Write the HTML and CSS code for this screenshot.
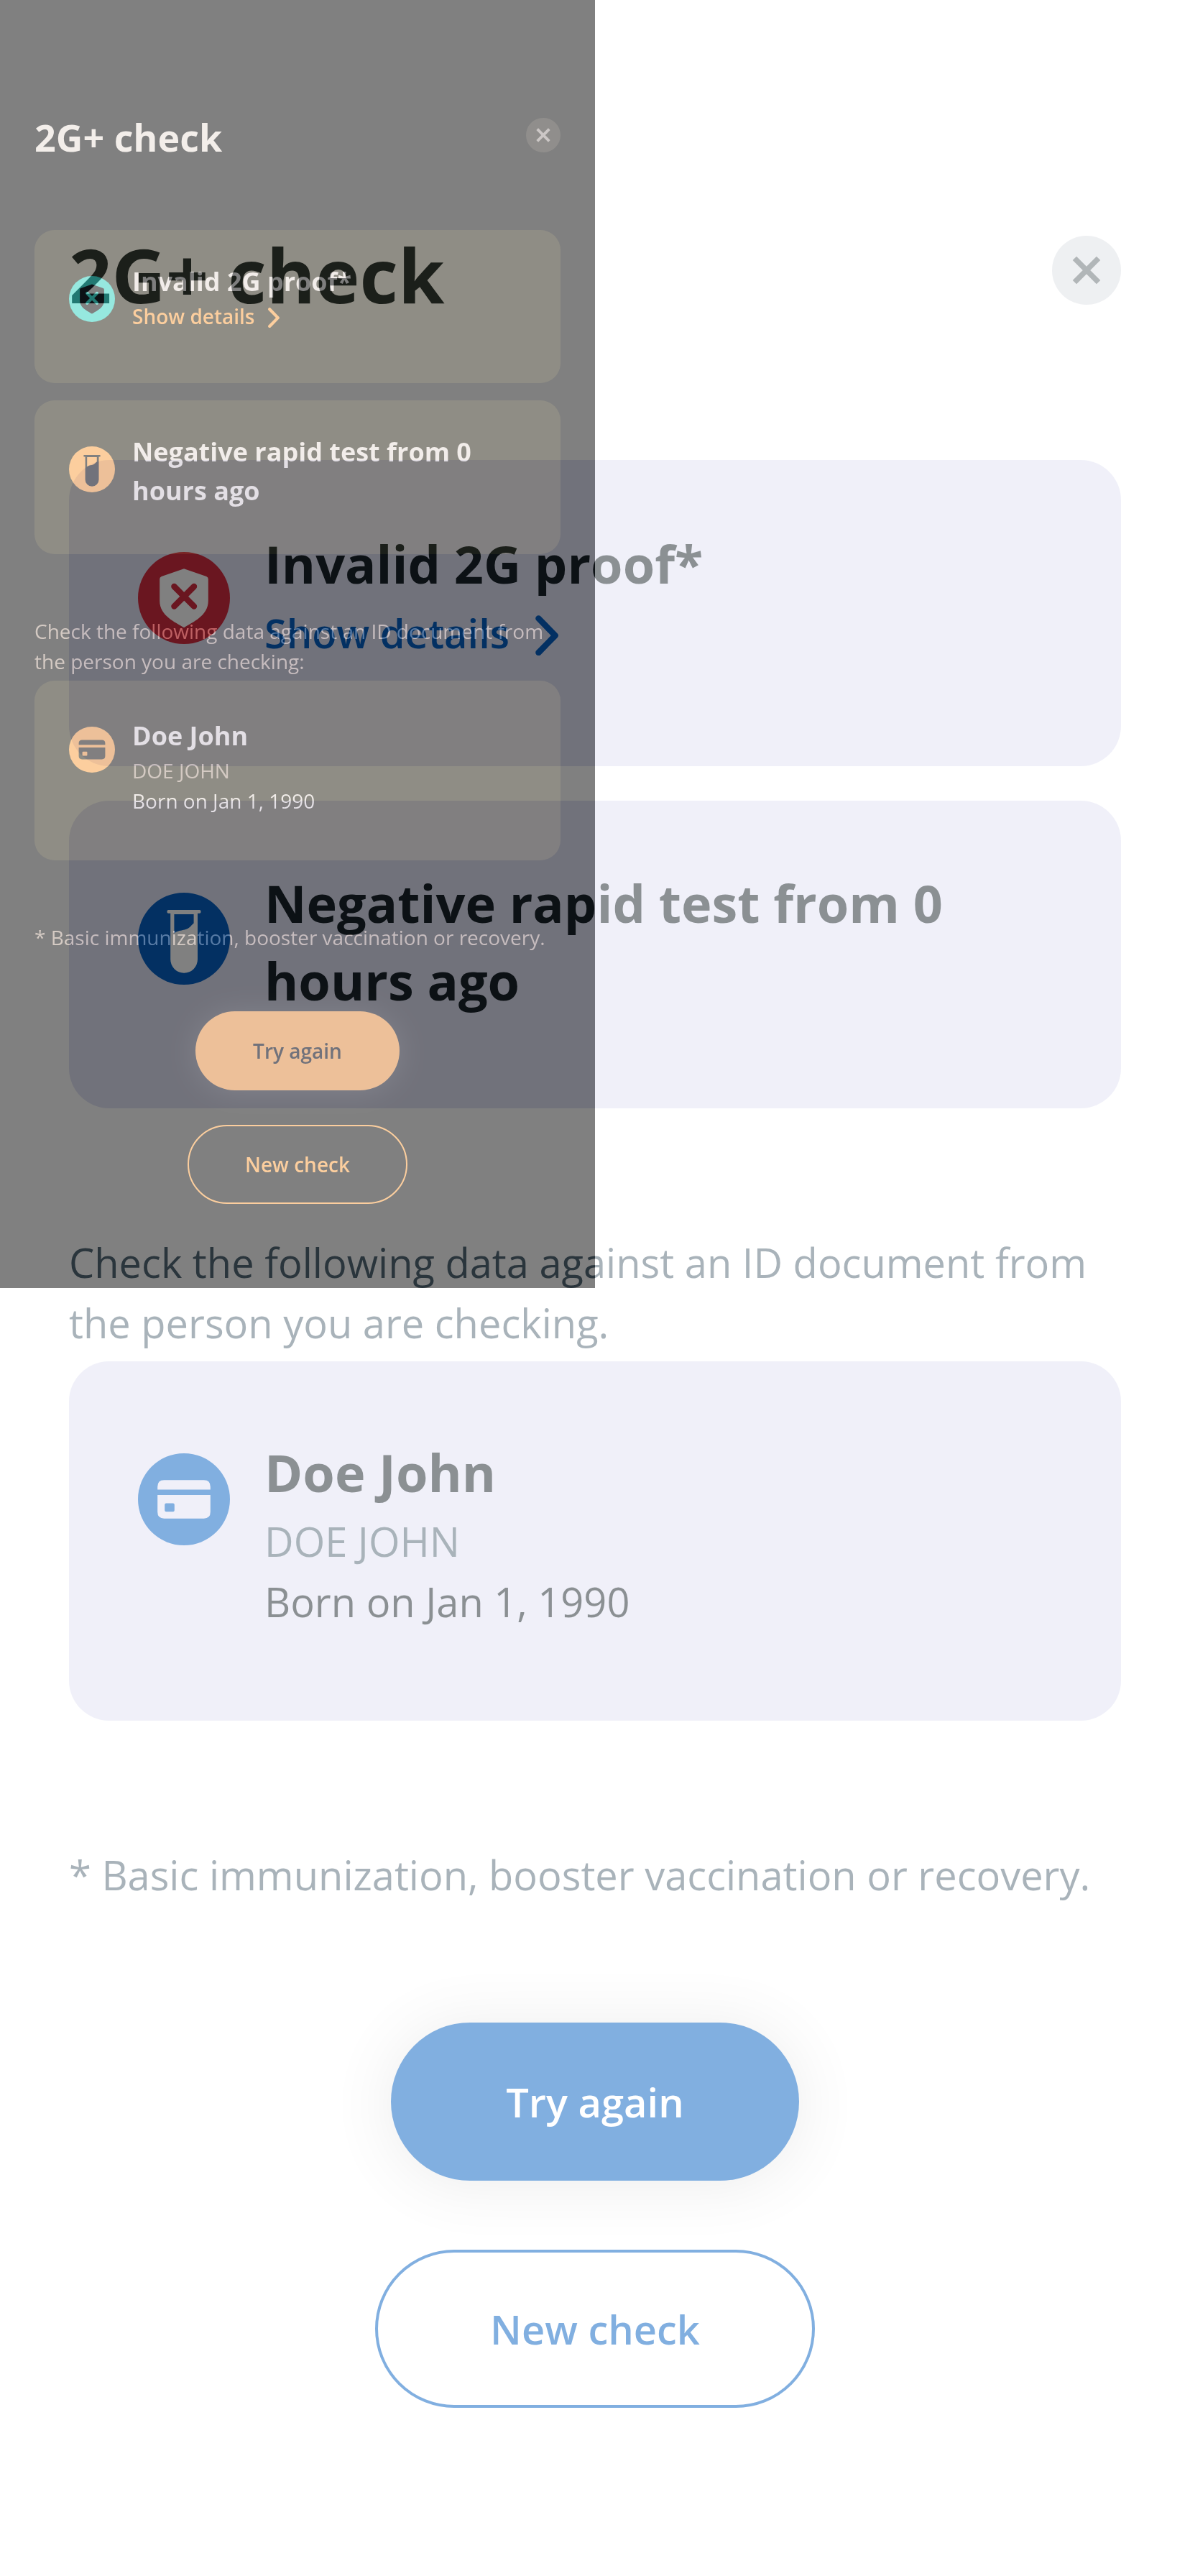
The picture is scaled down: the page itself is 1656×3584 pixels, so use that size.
FILE: index.html
```html
<!DOCTYPE html>
<html lang="en">
<head>
<meta charset="utf-8">
<title>2G+ check</title>
<link rel="stylesheet" href="styles.css">
</head>
<body>
<svg class="symbols" aria-hidden="true">
  <symbol id="close" viewBox="0 0 24 24">
    <path d="M7.85 7.85 16.15 16.15M16.15 7.85 7.85 16.15" fill="none" stroke="currentColor" stroke-width="1.9"/>
  </symbol>
  <symbol id="shield" viewBox="0 0 32 32">
    <circle cx="16" cy="16" r="16" fill="#d32d40"/>
    <path d="M16 5.8 23.8 8.5Q24.45 8.75 24.45 9.4V17C24.45 22.2 19 24.4 16 26.3 13 24.4 7.55 22.2 7.55 17V9.4Q7.55 8.75 8.2 8.5Z" fill="#fff"/>
    <path d="M12.6 12 19.5 18.9M19.5 12 12.6 18.9" fill="none" stroke="#d32d40" stroke-width="2.1" stroke-linecap="round"/>
  </symbol>
  <symbol id="tube" viewBox="0 0 32 32">
    <circle cx="16" cy="16" r="16" fill="#0661c3"/>
    <path fill-rule="evenodd" fill="#fff" d="M10.6 6H21.4Q21.9 6 21.9 6.6T21.4 7.2H20.75V23.2A4.72 4.72 0 0 1 11.3 23.2V7.2H10.6Q10.1 7.2 10.1 6.6T10.6 6ZM12.6 7.5V14.1C14.2 12.9 15.6 13.2 17 12.6 18.2 12.1 18.6 11.2 19.4 10.6V7.5Z"/>
  </symbol>
  <symbol id="idcard" viewBox="0 0 32 32">
    <circle cx="16" cy="16" r="16" fill="#0661c3"/>
    <path class="idcard-shape" fill-rule="evenodd" d="M6.8 12.6V11.6Q6.8 9.3 9.1 9.3H22.9Q25.2 9.3 25.2 11.6V12.6ZM6.8 14.5H25.2V20.4Q25.2 22.7 22.9 22.7H9.1Q6.8 22.7 6.8 20.4ZM9.8 17.4Q9.3 17.4 9.3 17.9V19.8Q9.3 20.3 9.8 20.3H12.2Q12.7 20.3 12.7 19.8V17.9Q12.7 17.4 12.2 17.4Z"/>
  </symbol>
  <symbol id="chevron" viewBox="0 0 8.1 14.1">
    <path d="M1.1 1.1 6.9 7.05 1.1 13" fill="none" stroke="currentColor" stroke-width="2.1" stroke-linecap="round" stroke-linejoin="round"/>
  </symbol>
</svg>

<main class="screen screen-compact">
  <header class="header">
    <h1 class="title">2G+ check</h1>
    <span class="close"><svg class="close-icon"><use href="#close"/></svg></span>
  </header>
  <section class="cards">
    <article class="card card-proof">
      <svg class="icon"><use href="#shield"/></svg>
      <div class="card-text">
        <h2 class="card-title">Invalid 2G proof*</h2>
        <div class="details">Show details<svg class="chevron"><use href="#chevron"/></svg></div>
      </div>
    </article>
    <article class="card card-test">
      <svg class="icon"><use href="#tube"/></svg>
      <div class="card-text">
        <h2 class="card-title">Negative rapid test from 0<br>hours ago</h2>
      </div>
    </article>
  </section>
  <p class="hint">Check the following data against an ID document from<br>the person you are checking:</p>
  <article class="card card-person">
    <svg class="icon"><use href="#idcard"/></svg>
    <div class="card-text">
      <h2 class="card-title">Doe John</h2>
      <p class="name">DOE JOHN</p>
      <p class="birth">Born on Jan 1, 1990</p>
    </div>
  </article>
  <p class="footnote">* Basic immunization, booster vaccination or recovery.</p>
  <div class="actions">
    <div class="button button-primary">Try again</div>
    <div class="button button-outline">New check</div>
  </div>
</main>

<main class="screen screen-large">
  <header class="header">
    <h1 class="title">2G+ check</h1>
    <span class="close"><svg class="close-icon"><use href="#close"/></svg></span>
  </header>
  <section class="cards">
    <article class="card card-proof">
      <svg class="icon"><use href="#shield"/></svg>
      <div class="card-text">
        <h2 class="card-title">Invalid 2G proof*</h2>
        <div class="details">Show details<svg class="chevron"><use href="#chevron"/></svg></div>
      </div>
    </article>
    <article class="card card-test">
      <svg class="icon"><use href="#tube"/></svg>
      <div class="card-text">
        <h2 class="card-title">Negative rapid test from 0<br>hours ago</h2>
      </div>
    </article>
  </section>
  <p class="hint">Check the following data against an ID document from<br>the person you are checking.</p>
  <article class="card card-person">
    <svg class="icon"><use href="#idcard"/></svg>
    <div class="card-text">
      <h2 class="card-title">Doe John</h2>
      <p class="name">DOE JOHN</p>
      <p class="birth">Born on Jan 1, 1990</p>
    </div>
  </article>
  <p class="footnote">* Basic immunization, booster vaccination or recovery.</p>
  <div class="actions">
    <div class="button button-primary">Try again</div>
    <div class="button button-outline">New check</div>
  </div>
</main>
</body>
</html>
```

FILE: styles.css
```css
* {
  box-sizing: border-box;
  margin: 0;
  padding: 0;
}

body {
  position: relative;
  width: 1656px;
  height: 3584px;
  background: #fff;
  font-family: "Open Sans", sans-serif;
  overflow: hidden;
}

.symbols {
  display: none;
}

/* One --u is one design unit; the screen is 414 by 896 units. */
.screen {
  width: calc(var(--u) * 414);
  height: calc(var(--u) * 896);
  padding: calc(var(--u) * 77.5) calc(var(--u) * 24) 0;
  background: #fff;
  color: #19232a;
  font-size: calc(var(--u) * 14);
  line-height: calc(var(--u) * 21);
  white-space: nowrap;
}

/* The half-size screen lies inverted under the translucent large one. */
.screen-compact {
  --u: 2px;
  --card: #e0e4f5;
  position: absolute;
  top: 0;
  left: 0;
  filter: invert(1);
}

.screen-large {
  --u: 4px;
  --card: #e2e3f5;
  position: relative;
  opacity: 0.5;
}

.header {
  display: flex;
  justify-content: space-between;
  height: calc(var(--u) * 36);
  margin-bottom: calc(var(--u) * 46.5);
}

.title {
  font-size: calc(var(--u) * 26);
  line-height: calc(var(--u) * 36);
  font-weight: 700;
}

.close {
  width: calc(var(--u) * 24);
  height: calc(var(--u) * 24);
  margin-top: calc(var(--u) * 4.5);
  border-radius: 50%;
  background: #dfe2e7;
  color: #667073;
}

.close-icon {
  display: block;
  width: 100%;
  height: 100%;
}

.cards {
  display: flex;
  flex-direction: column;
  gap: calc(var(--u) * 12);
}

.card {
  display: flex;
  gap: calc(var(--u) * 12);
  padding: 0 calc(var(--u) * 24);
  border-radius: calc(var(--u) * 14);
  background: var(--card);
}

.idcard-shape {
  fill: var(--card);
}

.card-proof {
  height: calc(var(--u) * 106.5);
}

.card-test {
  height: calc(var(--u) * 107);
}

.card-person {
  height: calc(var(--u) * 125);
}

.icon {
  flex: none;
  width: calc(var(--u) * 32);
  height: calc(var(--u) * 32);
  margin-top: calc(var(--u) * 32);
}

.card-text {
  padding-top: calc(var(--u) * 22.5);
}

.card-test .card-text {
  padding-top: calc(var(--u) * 22);
}

.screen-compact .card-test .card-text {
  padding-top: calc(var(--u) * 22.5);
}

.card-person .card-text {
  padding-top: calc(var(--u) * 25.1);
}

.card-title {
  font-size: calc(var(--u) * 18);
  line-height: calc(var(--u) * 27);
  font-weight: 700;
}

.details {
  display: flex;
  align-items: center;
  gap: calc(var(--u) * 9);
  color: #0661c3;
  font-weight: 600;
}

.chevron {
  width: calc(var(--u) * 8.1);
  height: calc(var(--u) * 14.1);
  margin-top: calc(var(--u) * 2);
}

.hint {
  margin: calc(var(--u) * 43.1) 0 calc(var(--u) * 2.9);
}

.hint,
.name,
.footnote {
  color: #556a78;
}

.footnote {
  margin: calc(var(--u) * 43.1) 0 calc(var(--u) * 40.9);
}

.actions {
  display: flex;
  flex-direction: column;
  align-items: center;
  gap: calc(var(--u) * 24);
}

.button {
  height: calc(var(--u) * 55);
  border-radius: calc(var(--u) * 27.5);
  line-height: calc(var(--u) * 55);
  font-weight: 600;
  text-align: center;
}

.button-primary {
  width: calc(var(--u) * 142);
  background: #0661c3;
  color: #fff;
  box-shadow: 0 calc(var(--u) * 1) calc(var(--u) * 20) rgba(0, 0, 0, 0.14);
}

.button-outline {
  width: calc(var(--u) * 153);
  border: calc(var(--u) * 1) solid #0661c3;
  color: #0661c3;
  line-height: calc(var(--u) * 53);
}
```
